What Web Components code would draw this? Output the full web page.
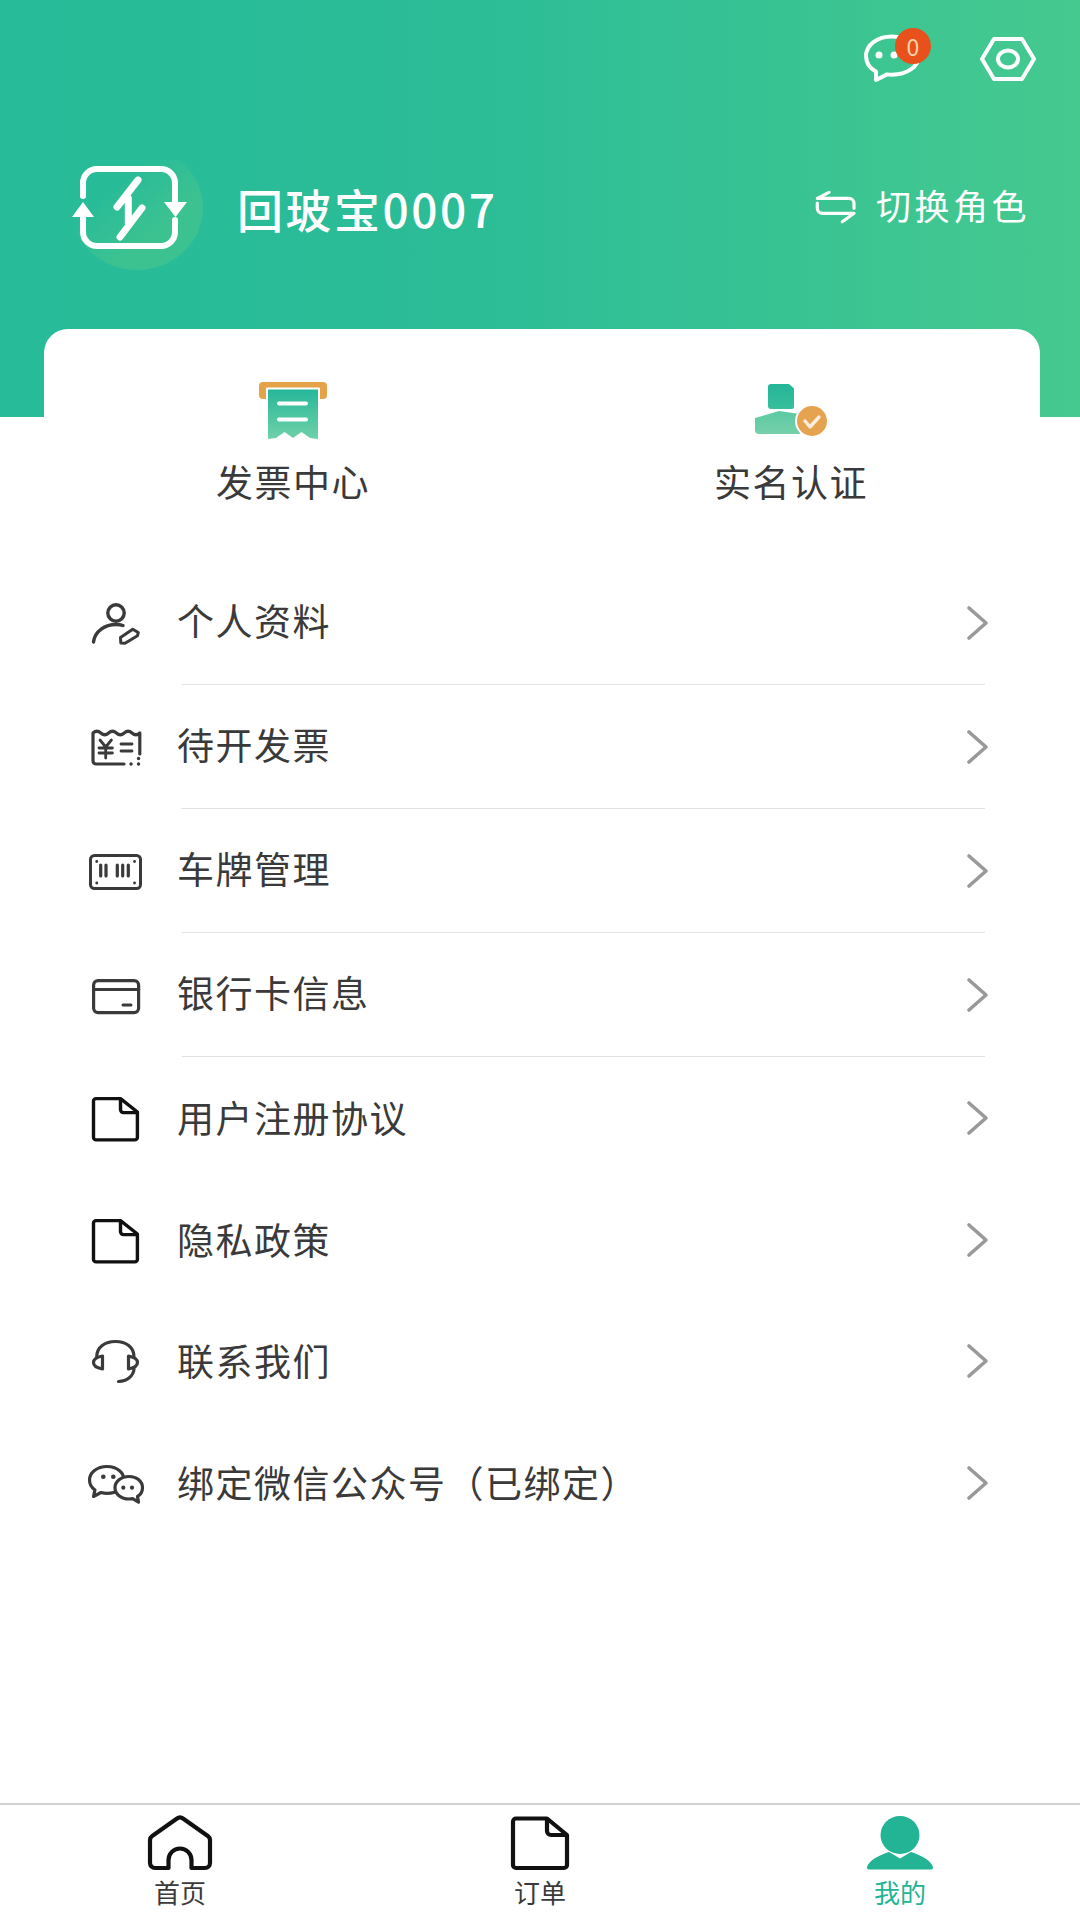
<!DOCTYPE html>
<html lang="zh">
<head>
<meta charset="utf-8">
<title>我的</title>
<style>
  html, body { margin: 0; background: #fff; }
  body { font-family: "Noto Sans CJK SC", "Noto Sans", sans-serif; color: #3a3a3a; }
</style>
</head>
<body>
<mine-page>
  <profile-header name="回玻宝0007" switch-label="切换角色" unread="0"></profile-header>
  <quick-card>
    <quick-item icon="receipt">发票中心</quick-item>
    <quick-item icon="verify">实名认证</quick-item>
  </quick-card>
  <menu-list>
    <menu-row icon="profile" divider>个人资料</menu-row>
    <menu-row icon="ticket" divider style="--rule-left:181px">待开发票</menu-row>
    <menu-row icon="plate" divider>车牌管理</menu-row>
    <menu-row icon="card" divider>银行卡信息</menu-row>
    <menu-row icon="doc">用户注册协议</menu-row>
    <menu-row icon="doc">隐私政策</menu-row>
    <menu-row icon="headset">联系我们</menu-row>
    <menu-row icon="wechat">绑定微信公众号（已绑定）</menu-row>
  </menu-list>
  <tab-bar>
    <tab-item icon="home">首页</tab-item>
    <tab-item icon="order">订单</tab-item>
    <tab-item icon="mine" active>我的</tab-item>
  </tab-bar>
</mine-page>

<script>
  const icons = {
    profile: `<svg width="60" height="60" viewBox="0 0 60 60" fill="none" stroke="#3a3a3a" stroke-width="3.4" stroke-linecap="round" stroke-linejoin="round">
      <circle cx="31" cy="20" r="8.2"/>
      <path d="M8.500 49C10 38 20 31.500 31 31.500c2.500 0 5 .3 7 1"/>
      <path d="M35.500 44.500L47.700 36.200l5.600 3.300-.8 3.200L40 50.200l-4.200-.2z" stroke-width="3"/>
    </svg>`,
    ticket: `<svg width="60" height="60" viewBox="0 0 60 60" fill="none" stroke="#3a3a3a" stroke-width="3.200" stroke-linecap="round" stroke-linejoin="round">
      <path d="M39 47H11a3 3 0 0 1-3-3V16q3.900-3.500 7.800 0t7.800 0 7.800 0 7.800 0 7.800 0 7.800 0V37"/>
      <path d="M15 23l5.700 7 5.700-7M14 31h13.400M14 36h13.400M20.700 30v11M36 27h11M36 34h11" stroke-width="2.800"/>
      <path d="M53.500 41.500h.1M53.500 47h.1M46 47h.1" stroke-width="3.400"/>
    </svg>`,
    plate: `<svg width="60" height="60" viewBox="0 0 60 60" fill="none" stroke="#3a3a3a" stroke-width="3" stroke-linecap="round">
      <rect x="5.500" y="14.500" width="50" height="33" rx="4"/>
      <path d="M15.700 24v11M21 24v11M32.300 24v11M37.700 24v11M43.300 24v11" stroke-width="3.200"/>
      <path d="M11.700 20.500h.1M49.500 20.500h.1M11.700 42h.1M49.500 42h.1" stroke-width="2.800"/>
    </svg>`,
    card: `<svg width="60" height="60" viewBox="0 0 60 60" fill="none" stroke="#3a3a3a" stroke-width="3.200" stroke-linecap="round">
      <rect x="8.600" y="15.600" width="45" height="32" rx="4.500"/>
      <path d="M8.600 24.500h45"/>
      <path d="M38 40h8" stroke-width="3"/>
    </svg>`,
    doc: `<svg width="60" height="60" viewBox="0 0 60 60" fill="none" stroke="#111" stroke-width="3.400" stroke-linejoin="round">
      <path d="M11 10.600h24.500L52.400 24v25.400a2.500 2.500 0 0 1-2.500 2.500H11a2.500 2.500 0 0 1-2.500-2.500V13.100A2.500 2.500 0 0 1 11 10.600z"/>
      <path d="M35.500 10.600v11a3 3 0 0 0 3 3h13.900"/>
    </svg>`,
    headset: `<svg width="60" height="60" viewBox="0 0 60 60" fill="none" stroke="#3a3a3a" stroke-width="3.200" stroke-linecap="round" stroke-linejoin="round">
      <path d="M11.700 26C11.700 16 20 10.500 30.500 10.500S49 16 49 26"/>
      <path d="M17.500 25v13C12 37 8.500 34.500 8.500 31.500S12 26 17.500 25z"/>
      <path d="M43.500 25c5 1 9 3.500 9 6.500s-4 5.500-9 6.500z"/>
      <path d="M49 38c-.5 7-7 12-15.500 12.500"/>
    </svg>`,
    wechat: `<svg width="60" height="60" viewBox="0 0 60 60" fill="#fff" stroke="#3a3a3a" stroke-width="3.200" stroke-linejoin="round">
      <path d="M22 13.500C12 13.500 4.500 19.500 4.500 27c0 4 2 7.500 5.500 10l-1.500 6.500 7.500-4c2 .5 4 .8 6 .8 10 0 17-6 17-13.300S32 13.500 22 13.500z"/>
      <path d="M44 23.500c-8 0-14 5-14 11.200S36 46 44 46c1.300 0 2.500-.1 3.700-.4l5.800 3.500-1-5.700c3.300-2 5-5.200 5-8.700 0-6.200-5.500-11.200-13.500-11.200z"/>
      <g fill="#3a3a3a" stroke="none">
        <circle cx="18.300" cy="23.700" r="2.300"/><circle cx="28.300" cy="23.700" r="2.300"/>
        <circle cx="38.300" cy="34.700" r="2.100"/><circle cx="47" cy="34.700" r="2.100"/>
      </g>
    </svg>`,
    receipt: `<svg width="80" height="64" viewBox="0 0 80 64" fill="none">
      <defs><linearGradient id="paper" x1="0" y1="0" x2="0" y2="1"><stop offset="0" stop-color="#26b799"/><stop offset="1" stop-color="#6fd1a9"/></linearGradient></defs>
      <rect x="6" y="3" width="68" height="17" rx="4" fill="#e5a349"/>
      <rect x="13" y="8.500" width="54" height="14" rx="1" fill="#fff"/>
      <path d="M15 10.500h50V60l-8-1-8.500-6-8.500 6-8.500-6-8.500 6-8 1z" fill="url(#paper)"/>
      <path d="M26 24.500h27M26 40.500h27" stroke="#fff" stroke-width="4" stroke-linecap="round"/>
    </svg>`,
    verify: `<svg width="80" height="64" viewBox="0 0 80 64" fill="none">
      <defs>
        <linearGradient id="head" x1="0" y1="0" x2="0" y2="1"><stop offset="0" stop-color="#24b598"/><stop offset="1" stop-color="#38bf9c"/></linearGradient>
        <linearGradient id="body" x1="0" y1="0" x2="0" y2="1"><stop offset="0" stop-color="#5acaa2"/><stop offset="1" stop-color="#76d0ab"/></linearGradient>
      </defs>
      <path d="M20 5h18l5 4.500V28a2 2 0 0 1-2 2H20a3 3 0 0 1-3-3V8a3 3 0 0 1 3-3z" fill="url(#head)"/>
      <path d="M4 39l24-7 21 3v20H8a4 4 0 0 1-4-4z" fill="url(#body)"/>
      <circle cx="61" cy="42" r="17" fill="#fff"/>
      <circle cx="61" cy="42" r="15" fill="#e5a34f"/>
      <path d="M54 42l5 6 9-10" stroke="#fbeedd" stroke-width="3.400" stroke-linecap="round" stroke-linejoin="round"/>
    </svg>`,
    home: `<svg width="70" height="60" viewBox="0 0 70 60" fill="none" stroke="#111" stroke-width="4.200" stroke-linejoin="round">
      <path d="M23.500 55H10a5 5 0 0 1-5-5V27a5 5 0 0 1 2.200-4L32 5.500a5 5 0 0 1 6 0L62.800 23a5 5 0 0 1 2.200 4v23a5 5 0 0 1-5 5H46.500v-8a11.500 11.500 0 0 0-23 0z"/>
    </svg>`,
    order: `<svg width="70" height="60" viewBox="0 0 70 60" fill="none" stroke="#111" stroke-width="4.200" stroke-linejoin="round">
      <path d="M11 5.500h31L62 22v30a3 3 0 0 1-3 3H11a3 3 0 0 1-3-3V8.500a3 3 0 0 1 3-3z"/>
      <path d="M42 5.500V18a4 4 0 0 0 4 4h16"/>
    </svg>`,
    mine: `<svg width="70" height="60" viewBox="0 0 70 60" fill="#22b495">
      <ellipse cx="35" cy="22" rx="19.500" ry="19"/>
      <path d="M2 54c2-7 14-12.500 22-15l11 6.500L46 39c8 2.500 20 8 22 15a2 2 0 0 1-2 2.500H4A2 2 0 0 1 2 54z"/>
    </svg>`
  };

  class UiIcon extends HTMLElement {
    constructor() {
      super();
      this.attachShadow({ mode: "open" });
    }
    connectedCallback() {
      this.shadowRoot.innerHTML = `<style>:host{display:block;line-height:0}</style>` + icons[this.getAttribute("name")];
    }
  }
  customElements.define("ui-icon", UiIcon);

  const pageTemplate = document.createElement("template");
  pageTemplate.innerHTML = `
    <style>
      :host { display: flex; flex-direction: column; height: 1920px; overflow: hidden; }
      ::slotted(tab-bar) { margin-top: auto; }
    </style>
    <slot></slot>
  `;
  customElements.define("mine-page", class extends HTMLElement {
    constructor() {
      super();
      this.attachShadow({ mode: "open" }).appendChild(pageTemplate.content.cloneNode(true));
    }
  });

  const headerTemplate = document.createElement("template");
  headerTemplate.innerHTML = `
    <style>
      :host { display: block; height: 417px; color: #fff; background: linear-gradient(90deg, #27bb99 0%, #2cbd97 45%, #45c98f 100%); }
      .actions { display: flex; justify-content: flex-end; align-items: center; gap: 55px; padding: 33px 42px 0 0; height: 52px; }
      .msg { position: relative; line-height: 0; }
      .badge {
        position: absolute; left: 32px; top: -5px; width: 36px; height: 36px; border-radius: 50%;
        background: #e8501c; color: #f8d3a8; font-size: 23px; line-height: 36px; text-align: center;
      }
      .profile { display: flex; align-items: center; margin-top: 75px; padding-left: 68px; height: 115px; }
      .logo { line-height: 0; flex: none; }
      .name { margin: 0 0 20px 32px; font-size: 46px; font-weight: 500; letter-spacing: 2.500px; line-height: 60px; flex: none; }
      .switch { margin: 0 50px 26px auto; display: flex; align-items: center; font-size: 35px; letter-spacing: 3.500px; }
      .switch svg { margin: 4px 18px 0 0; }
    </style>
    <div class="actions">
      <div class="msg">
        <svg width="60" height="52" viewBox="0 0 60 52" fill="none" stroke="#fff" stroke-width="4" stroke-linejoin="round">
          <path d="M29 3.500C14 3.500 3 12 3 23c0 7 4 12.500 10 15.500V47l11-5.600c1.700.3 3.300.4 5 .4 15 0 27-8.500 27-19S44 3.500 29 3.500z"/>
          <circle cx="16" cy="22" r="3.500" fill="#fff" stroke="none"/>
          <circle cx="31" cy="22" r="3.500" fill="#fff" stroke="none"/>
        </svg>
        <span class="badge"></span>
      </div>
      <svg width="60" height="48" viewBox="0 0 60 48" fill="none" stroke="#fff" stroke-width="4" stroke-linejoin="round">
        <path d="M4 24L16 4h28l12 20-12 20H16z"/>
        <ellipse cx="30" cy="24" rx="10" ry="8.500"/>
      </svg>
    </div>
    <div class="profile">
      <svg class="logo" width="137" height="115" viewBox="0 0 137 115" fill="none">
        <defs>
          <linearGradient id="blob" x1="0.1" y1="0.1" x2="0.8" y2="0.9">
            <stop offset="0.3" stop-color="#3cc291" stop-opacity="0"/>
            <stop offset="0.75" stop-color="#3cc291"/>
          </linearGradient>
        </defs>
        <ellipse cx="69" cy="48" rx="66" ry="62" fill="url(#blob)"/>
        <g stroke="#fff" stroke-width="6" stroke-linecap="round">
          <path d="M15 36V23A14 14 0 0 1 29 9h64a14 14 0 0 1 14 14v19"/>
          <path d="M15 57v15a14 14 0 0 0 14 14h64a14 14 0 0 0 14-14V60"/>
        </g>
        <path d="M4 57h22L15 42zM96 42h23l-11.500 15z" fill="#fff"/>
        <path d="M70 20L49 47M74 48L52 77M60.300 38v25" stroke="#fff" stroke-width="7" stroke-linecap="round"/>
      </svg>
      <span class="name"></span>
      <div class="switch">
        <svg width="44" height="36" viewBox="0 0 44 36" fill="none" stroke="#fff" stroke-width="3.200" stroke-linecap="round" stroke-linejoin="round">
          <path d="M15 3.300L3.300 9.300H35a5 5 0 0 1 5 5v5"/>
          <path d="M3.300 14v5a5.300 5.300 0 0 0 5.300 5.300H40l-11.700 8.400"/>
        </svg>
        <span class="switch-label"></span>
      </div>
    </div>
  `;
  customElements.define("profile-header", class extends HTMLElement {
    constructor() {
      super();
      this.attachShadow({ mode: "open" }).appendChild(headerTemplate.content.cloneNode(true));
    }
    connectedCallback() {
      const root = this.shadowRoot;
      root.querySelector(".name").textContent = this.getAttribute("name");
      root.querySelector(".switch-label").textContent = this.getAttribute("switch-label");
      root.querySelector(".badge").textContent = this.getAttribute("unread");
    }
  });

  const cardTemplate = document.createElement("template");
  cardTemplate.innerHTML = `
    <style>
      :host {
        display: grid; grid-template-columns: 1fr 1fr; height: 232px; margin: -88px 40px 0 44px;
        background: #fff; border-radius: 24px 24px 0 0; position: relative;
      }
    </style>
    <slot></slot>
  `;
  customElements.define("quick-card", class extends HTMLElement {
    constructor() {
      super();
      this.attachShadow({ mode: "open" }).appendChild(cardTemplate.content.cloneNode(true));
    }
  });

  customElements.define("quick-item", class extends HTMLElement {
    constructor() {
      super();
      this.attachShadow({ mode: "open" });
    }
    connectedCallback() {
      this.shadowRoot.innerHTML = `
        <style>
          :host { display: flex; flex-direction: column; align-items: center; padding-top: 50px; }
          .label { margin-top: 13px; font-size: 37px; letter-spacing: 1.500px; line-height: 50px; color: #3a3a3a; }
        </style>
        <ui-icon name="${this.getAttribute("icon")}"></ui-icon>
        <div class="label"><slot></slot></div>
      `;
    }
  });

  const listTemplate = document.createElement("template");
  listTemplate.innerHTML = `<style>:host{display:block}</style><slot></slot>`;
  customElements.define("menu-list", class extends HTMLElement {
    constructor() {
      super();
      this.attachShadow({ mode: "open" }).appendChild(listTemplate.content.cloneNode(true));
    }
  });

  customElements.define("menu-row", class extends HTMLElement {
    constructor() {
      super();
      this.attachShadow({ mode: "open" });
    }
    connectedCallback() {
      const hasRule = this.hasAttribute("divider");
      this.shadowRoot.innerHTML = `
        <style>
          :host { display: block; }
          .body { display: flex; align-items: center; height: ${hasRule ? 123 : 121.7}px; padding: 0 90px 0 85px; }
          .label { flex: 1; margin: 0 0 ${hasRule ? 4.5 : 2}px 32px; font-size: 37px; letter-spacing: 1.500px; color: #3a3a3a; }
          .rule { height: 1px; margin: 0 95px 0 var(--rule-left, 182px); background: #e2e2e2; }
        </style>
        <div class="body">
          <ui-icon name="${this.getAttribute("icon")}"></ui-icon>
          <div class="label"><slot></slot></div>
          <svg width="24" height="36" viewBox="0 0 24 36" fill="none" stroke="#999" stroke-width="3.600" stroke-linecap="round" stroke-linejoin="round">
            <path d="M3 3l17 15L3 33"/>
          </svg>
        </div>
        ${hasRule ? `<div class="rule"></div>` : ""}
      `;
    }
  });

  const tabsTemplate = document.createElement("template");
  tabsTemplate.innerHTML = `
    <style>
      :host { display: grid; grid-template-columns: repeat(3, 1fr); height: 115px; border-top: 2px solid #d2d2d2; background: #fff; }
    </style>
    <slot></slot>
  `;
  customElements.define("tab-bar", class extends HTMLElement {
    constructor() {
      super();
      this.attachShadow({ mode: "open" }).appendChild(tabsTemplate.content.cloneNode(true));
    }
  });

  customElements.define("tab-item", class extends HTMLElement {
    constructor() {
      super();
      this.attachShadow({ mode: "open" });
    }
    connectedCallback() {
      const on = this.hasAttribute("active");
      this.shadowRoot.innerHTML = `
        <style>
          :host { display: flex; flex-direction: column; align-items: center; padding-top: 8px; }
          .label { margin-top: 2px; font-size: 26px; line-height: 34px; color: ${on ? "#22b495" : "#3a3a3a"}; }
        </style>
        <ui-icon name="${this.getAttribute("icon")}"></ui-icon>
        <div class="label"><slot></slot></div>
      `;
    }
  });
</script>
</body>
</html>
